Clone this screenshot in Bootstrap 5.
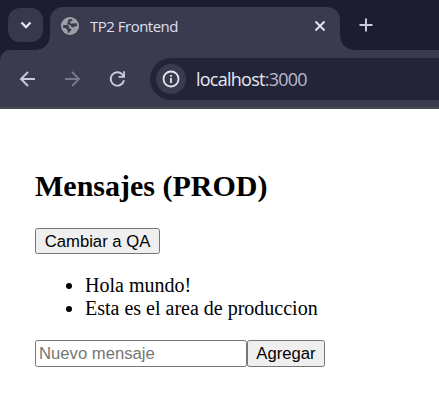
<!DOCTYPE html>
<html lang="es">
<head>
<meta charset="utf-8">
<meta name="viewport" content="width=device-width, initial-scale=1">
<title>TP2 Frontend</title>
<link rel="stylesheet" href="https://cdn.jsdelivr.net/npm/bootstrap@5.3.0/dist/css/bootstrap.min.css">
<style>
body { height: 420px; background: #fff; color: #000; font-family: "Liberation Serif", serif; font-size: 20px; line-height: 23px; }
svg { display: block; flex: none; }
.tabstrip { height: 50px; background: #1c1d2e; padding: 7px 0 0 8px; }
.tab-search { width: 35px; height: 34px; border-radius: 12px; background: #37384b; margin-top: 1px; }
.browser-tab { width: 290px; height: 43px; margin-left: 7px; padding: 0 14px 6px 11px; background: #3a3b4e; border-radius: 13px 13px 0 0; }
.browser-tab::before, .browser-tab::after { content: ""; position: absolute; bottom: 0; width: 14px; height: 14px; }
.browser-tab::before { left: -14px; background: radial-gradient(circle at 0 0, transparent 13.5px, #3a3b4e 14px); }
.browser-tab::after { right: -14px; background: radial-gradient(circle at 100% 0, transparent 13.5px, #3a3b4e 14px); }
.tab-title { margin-left: 11px; font: 15px/20px "Open Sans", "Noto Sans", sans-serif; letter-spacing: -.5px; color: #dfdff0; white-space: nowrap; }
.new-tab { margin: 10px 0 0 18px; }
.toolbar-wrap { background: #1c1d2e; }
.toolbar { height: 59px; padding: 8px 0 0 19px; background: #3a3b4e; border-bottom: 2px solid #48484f; border-top-left-radius: 10px; }
.nav-icons { gap: 27px; height: 41px; width: 131px; }
.omnibox { height: 42px; background: #232438; border-radius: 21px 0 0 21px; padding-left: 6px; }
.site-info { width: 30px; height: 30px; border-radius: 50%; background: #3a3b4e; }
.address { margin-left: 10px; font: 18px/24px "Open Sans", "Noto Sans", sans-serif; letter-spacing: -.75px; color: #e8e8f4; white-space: nowrap; }
.address span { color: #b9bace; }
.page { padding: 60px 0 0 35px; }
.page h2 { font-size: 30px; line-height: 34px; font-weight: 700; margin-bottom: 25px; }
.plain { font: 16.667px/19px "Liberation Sans", Arial, sans-serif; color: #000; border: 1px solid #767676; border-radius: 2.5px; }
button.plain { background: #efefef; padding: 0; height: 26px; }
.switch { width: 125px; }
.page ul { margin: 20px 0; padding-left: 50px; }
input.plain { width: 212px; height: 27px; padding: 1px 3px; background: #fff; }
input.plain::placeholder { color: #757575; opacity: 1; }
button.add { width: 78px; height: 27px; }
</style>
<script src="https://cdn.jsdelivr.net/npm/bootstrap@5.3.0/dist/js/bootstrap.bundle.min.js"></script>
</head>
<body class="overflow-hidden">
<header>
  <div class="tabstrip d-flex align-items-start">
    <div class="tab-search d-flex align-items-center justify-content-center">
      <svg width="12" height="8" viewBox="0 0 12 8" fill="none" stroke="#e4e4f4" stroke-width="2.300"><path d="M1.500 1.500 6 6l4.500-4.500"/></svg>
    </div>
    <div class="browser-tab position-relative d-flex align-items-center">
      <svg width="18" height="18" viewBox="0 0 18 18"><circle cx="9" cy="9" r="9" fill="#9da1a7"/><path fill="#3a3b4e" d="M11.300 2.200 8.500 2 6.800 3.700v2.100L5.800 7.400l2.700.3 1.700 1.200v1.200l2.400.4 1.300-1.200h2.200A7 7 0 0 0 15.300 6l-1.700.6-1.800-.4-1.300.5-1.300-.8V4.500l2.100-.8ZM2 8.100h4.600l1.600 1.500v1.700l2 .5v2l-1.900 1v1.300l-1.700-.7v-2.200L4.500 11H2.300Z"/></svg>
      <span class="tab-title flex-grow-1">TP2 Frontend</span>
      <svg width="12" height="12" viewBox="0 0 12 12" stroke="#e4e4f0" stroke-width="1.900"><path d="m1.500 1.500 9 9m0-9-9 9"/></svg>
    </div>
    <svg class="new-tab" width="16" height="16" viewBox="0 0 16 16" stroke="#c9c9e2" stroke-width="2"><path d="M8 1.500v13M1.500 8h13"/></svg>
  </div>
  <div class="toolbar-wrap">
    <div class="toolbar d-flex">
      <div class="nav-icons d-flex align-items-center flex-shrink-0">
        <svg width="18" height="18" viewBox="0 0 18 18" fill="none" stroke="#c9c9e2" stroke-width="1.900"><path d="M16 9H2.500M9 2 2 9l7 7"/></svg>
        <svg width="18" height="18" viewBox="0 0 18 18" fill="none" stroke="#77788a" stroke-width="1.900"><path d="M1 9h13.500M8 2l7 7-7 7"/></svg>
        <svg width="18" height="18" viewBox="0 0 18 18" fill="none" stroke="#c9c9e2" stroke-width="1.900"><path d="M15 10.300A6.700 6.700 0 1 1 13.300 4.300L14.800 5.800"/><path fill="#c9c9e2" stroke="none" d="M14.200 1.300H16v6.500H9.500V6h3l1.700-1.700Z"/></svg>
      </div>
      <div class="omnibox d-flex align-items-center flex-grow-1">
        <div class="site-info d-flex align-items-center justify-content-center">
          <svg width="18" height="18" viewBox="0 0 18 18"><circle cx="9" cy="9" r="7.500" fill="none" stroke="#e6e6f2" stroke-width="1.800"/><path fill="#e6e6f2" d="M8.100 8h1.800v5H8.100zM8.100 5h1.800v1.800H8.100z"/></svg>
        </div>
        <div class="address">localhost<span>:3000</span></div>
      </div>
    </div>
  </div>
</header>
<main class="page">
  <h2>Mensajes (PROD)</h2>
  <button class="plain switch d-block" type="button">Cambiar a QA</button>
  <ul>
    <li>Hola mundo!</li>
    <li>Esta es el area de produccion</li>
  </ul>
  <form class="d-flex">
    <input class="plain" type="text" placeholder="Nuevo mensaje">
    <button class="plain add" type="button">Agregar</button>
  </form>
</main>
</body>
</html>
